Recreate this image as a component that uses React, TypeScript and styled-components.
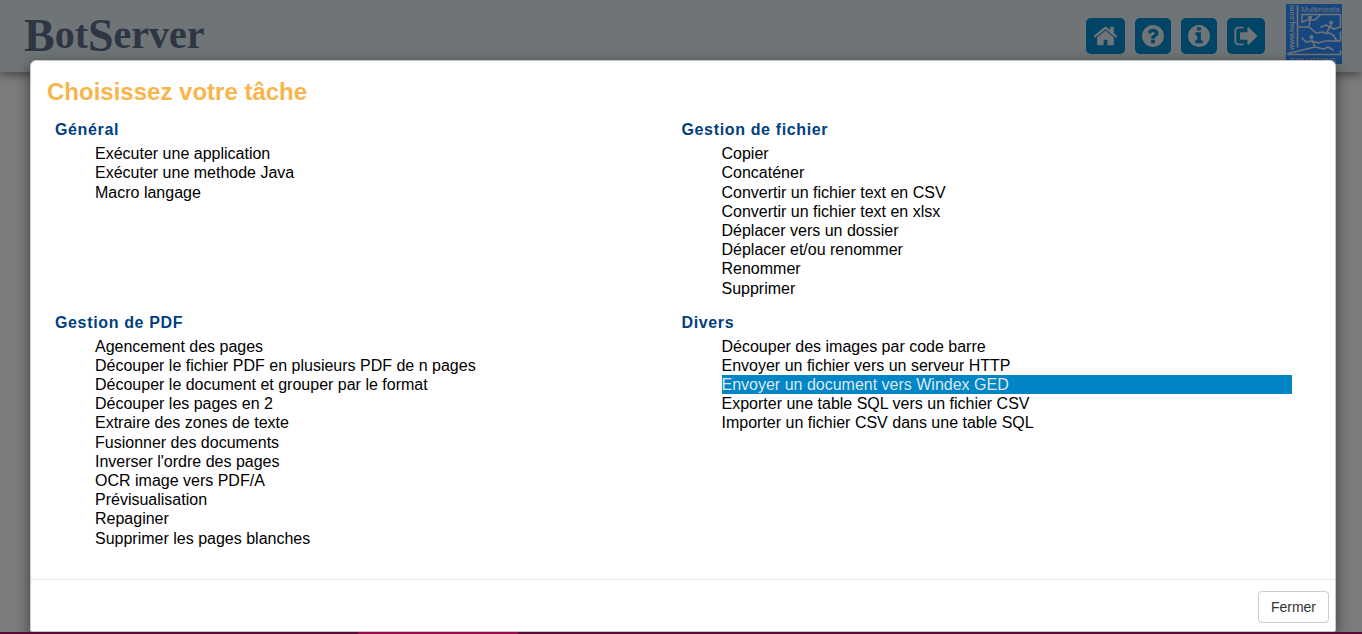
import React from "react";
import styled, { createGlobalStyle } from "styled-components";

const GlobalStyle = createGlobalStyle`
  *, *::before, *::after { box-sizing: border-box; }
  html, body { margin: 0; overflow: hidden; }
  body {
    background: #f8f9fb;
    color: #000;
    font-family: "Liberation Sans", Arial, sans-serif;
    font-size: 16px;
    line-height: 1.2;
  }
`;

const Page = styled.div`
  position: relative;
  height: 100vh;
  overflow: hidden;
`;

const Header = styled.header`
  display: flex;
  align-items: flex-start;
  justify-content: space-between;
  height: 72px;
  padding: 4px 20px 0 24px;
  background: #dfe8ee;
  box-shadow: 0 2px 10px rgba(0, 0, 0, 0.5);
`;

const Brand = styled.a`
  padding-top: 10px;
  color: #5c6b88;
  font-family: "Liberation Serif", "Times New Roman", serif;
  font-size: 40px;
  line-height: 42px;
  font-weight: bold;
  text-decoration: none;
`;

const Capital = styled.span`
  font-size: 46px;
  line-height: 42px;
  vertical-align: -3px;
`;

const Actions = styled.nav`
  display: flex;
  gap: 10px;
`;

const IconButton = styled.button`
  display: flex;
  align-items: center;
  justify-content: center;
  height: 36px;
  margin-top: 14px;
  padding: 0 7px;
  border: 0;
  border-radius: 5px;
  background: #008aca;
  color: #dfe8ee;
`;

const Glyph = styled.svg`
  height: 26px;
  fill: currentColor;
`;

const Logo = styled.svg`
  width: 56px;
  height: 60px;
  margin-left: 11px;
`;

const Backdrop = styled.div`
  position: absolute;
  inset: 0;
  padding: 60px 26px 2px 30px;
  background: rgba(0, 0, 0, 0.5);
`;

const Dialog = styled.section`
  display: flex;
  flex-direction: column;
  height: 100%;
  border: 1px solid #c8c8c8;
  border-radius: 6px 6px 2px 2px;
  background: #fff;
  box-shadow: 0 5px 15px rgba(0, 0, 0, 0.5);
`;

const Title = styled.h1`
  margin: 15px 16px 13px;
  color: #f9b54c;
  font-size: 24px;
  line-height: 1.3;
`;

const Groups = styled.div`
  flex: 1;
  display: grid;
  grid-template-columns: 1fr 1fr;
  align-content: start;
  row-gap: 15px;
  padding: 0 27px 0 24px;
`;

const Group = styled.section`
  padding-right: 16px;
`;

const GroupTitle = styled.h2`
  margin: 0 0 4px;
  color: #004080;
  font-size: 16px;
  line-height: 20px;
  letter-spacing: 0.04em;
`;

const TaskList = styled.ul`
  margin: 0;
  padding: 0 0 0 40px;
  list-style: none;
`;

const Task = styled.a<{ $active?: boolean }>`
  display: block;
  background: ${(p) => (p.$active ? "#0085c7" : "transparent")};
  color: ${(p) => (p.$active ? "#dfe8ee" : "#000")};
  text-decoration: none;
`;

const Footer = styled.footer`
  display: flex;
  justify-content: flex-end;
  padding: 11px 6px 8px;
  border-top: 1px solid #e5e5e5;
`;

const CloseButton = styled.button`
  padding: 5px 12px;
  border: 1px solid #ccc;
  border-radius: 4px;
  background: #fff;
  color: #333;
  font-family: inherit;
  font-size: 14px;
  line-height: 20px;
`;

const Progress = styled.div`
  position: absolute;
  inset: auto 0 0 0;
  height: 2px;
  padding-left: 358px;
  background: #560a35;
`;

const ProgressValue = styled.div`
  width: 160px;
  height: 2px;
  background: #9b0a4b;
`;

const disc =
  "M1664 896q0 209-103 385.5t-279.5 279.5-385.5 103-385.5-103-279.5-279.5-103-385.5 103-385.5 279.5-279.5 385.5-103 385.5 103 279.5 279.5 103 385.5z";

const actions = [
  {
    label: "Accueil",
    width: 25,
    viewBox: "64 0 1664 1792",
    path: "M1472 992v480q0 26-19 45t-45 19h-384v-384h-256v384h-384q-26 0-45-19t-19-45v-480q0-1 .5-3t.5-3l575-474 575 474q1 2 1 6zm223-69l-62 74q-8 9-21 11h-3q-13 0-21-7l-692-577-692 577q-12 8-24 7-13-2-21-11l-62-74q-8-10-7-23.5t11-21.5l719-599q32-26 76-26t76 26l244 204v-195q0-14 9-23t23-9h192q14 0 23 9t9 23v408l219 182q10 8 11 21.5t-7 23.5z",
  },
  {
    label: "Aide",
    width: 22,
    viewBox: "128 0 1536 1792",
    path: "M1024 1376v-192q0-14-9-23t-23-9h-192q-14 0-23 9t-9 23v192q0 14 9 23t23 9h192q14 0 23-9t9-23zm256-672q0-88-55.5-163t-138.5-116-170-41q-243 0-371 213-15 24 8 42l132 100q7 6 19 6 16 0 25-12 53-68 86-92 34-24 86-24 48 0 85.5 26t37.5 59q0 38-20 61t-68 45q-63 28-115.5 86.5t-52.5 125.5v36q0 14 9 23t23 9h192q14 0 23-9t9-23q0-19 21.5-49.5t54.5-49.5q32-18 49-28.5t46-35 44.5-48 28-60.5 12.5-81z" + disc,
  },
  {
    label: "Informations",
    width: 22,
    viewBox: "128 0 1536 1792",
    path: "M1152 1376v-160q0-14-9-23t-23-9h-96v-512q0-14-9-23t-23-9h-320q-14 0-23 9t-9 23v160q0 14 9 23t23 9h96v320h-96q-14 0-23 9t-9 23v160q0 14 9 23t23 9h448q14 0 23-9t9-23zm-128-896v-160q0-14-9-23t-23-9h-192q-14 0-23 9t-9 23v160q0 14 9 23t23 9h192q14 0 23-9t9-23z" + disc,
  },
  {
    label: "Déconnexion",
    width: 24,
    viewBox: "64 0 1600 1792",
    path: "M704 1440q0 4 1 20t.5 26.5-3 23.5-10 19.5-20.5 6.5h-320q-119 0-203.5-84.5t-84.5-203.5v-704q0-119 84.5-203.5t203.5-84.5h320q13 0 22.5 9.5t9.5 22.5q0 4 1 20t.5 26.5-3 23.5-10 19.5-20.5 6.5h-320q-66 0-113 47t-47 113v704q0 66 47 113t113 47h312l11.5 1 11.5 3 8 5.5 7 9 2 13.5zm928-544q0 26-19 45l-544 544q-19 19-45 19t-45-19-19-45v-288h-448q-26 0-45-19t-19-45v-384q0-26 19-45t45-19h448v-288q0-26 19-45t45-19 45 19l544 544q19 19 19 45z",
  },
];

const groups = [
  {
    title: "Général",
    tasks: ["Exécuter une application", "Exécuter une methode Java", "Macro langage"],
  },
  {
    title: "Gestion de fichier",
    tasks: [
      "Copier",
      "Concaténer",
      "Convertir un fichier text en CSV",
      "Convertir un fichier text en xlsx",
      "Déplacer vers un dossier",
      "Déplacer et/ou renommer",
      "Renommer",
      "Supprimer",
    ],
  },
  {
    title: "Gestion de PDF",
    tasks: [
      "Agencement des pages",
      "Découper le fichier PDF en plusieurs PDF de n pages",
      "Découper le document et grouper par le format",
      "Découper les pages en 2",
      "Extraire des zones de texte",
      "Fusionner des documents",
      "Inverser l'ordre des pages",
      "OCR image vers PDF/A",
      "Prévisualisation",
      "Repaginer",
      "Supprimer les pages blanches",
    ],
  },
  {
    title: "Divers",
    tasks: [
      "Découper des images par code barre",
      "Envoyer un fichier vers un serveur HTTP",
      "Envoyer un document vers Windex GED",
      "Exporter une table SQL vers un fichier CSV",
      "Importer un fichier CSV dans une table SQL",
    ],
  },
];

const activeTask = "Envoyer un document vers Windex GED";

function CompanyLogo() {
  return (
    <Logo viewBox="0 0 56 60" role="img" aria-label="Multimédia Solutions">
      <rect width="56" height="60" fill="#308cff" />
      <g fill="#dfe8ee" fontFamily="Liberation Sans, sans-serif">
        <text x="15" y="8" fontSize="8">Multimédia</text>
        <text transform="translate(8 46) rotate(-90)" fontSize="7" fontWeight="bold">www.luq.com</text>
        <text x="4" y="59" fontSize="8">SOLUTIONS</text>
      </g>
      <g fill="none" stroke="#dfe8ee" strokeWidth="1.6" strokeLinejoin="round" strokeLinecap="round">
        <path d="M11.5 2V43M16 18V10.500H54.500V23M54.500 28V37H40M2 50.500H54.500V47" />
        <path d="M16 18L21 16H29L34 11M24 16L23 23M13 23H23L30 29L37 28L41 30" />
        <path d="M35 23L40 21L48 25L54 23M45 21L41 28L47 31L51 37" />
        <path d="M16 34L20 38L26 37L32 39L39 37M26 36L29 43L38 45L42 43L47 46M29 43L2 49.500" />
      </g>
      <g fill="#dfe8ee">
        <circle cx="24" cy="13.500" r="2" />
        <circle cx="45" cy="18.500" r="2" />
        <circle cx="25.500" cy="33" r="2" />
      </g>
    </Logo>
  );
}

export default function App() {
  return (
    <>
      <GlobalStyle />
      <Page>
        <Header>
          <Brand href="#"><Capital>B</Capital>ot<Capital>S</Capital>erver</Brand>
          <Actions>
            {actions.map((action) => (
              <IconButton key={action.label} type="button" aria-label={action.label}>
                <Glyph width={action.width} viewBox={action.viewBox} aria-hidden="true">
                  <path fillRule="evenodd" d={action.path} />
                </Glyph>
              </IconButton>
            ))}
            <CompanyLogo />
          </Actions>
        </Header>
        <Backdrop>
          <Dialog role="dialog" aria-labelledby="dialog-title">
            <Title id="dialog-title">Choisissez votre tâche</Title>
            <Groups>
              {groups.map((group) => (
                <Group key={group.title}>
                  <GroupTitle>{group.title}</GroupTitle>
                  <TaskList>
                    {group.tasks.map((task) => (
                      <li key={task}>
                        <Task href="#" $active={task === activeTask}>{task}</Task>
                      </li>
                    ))}
                  </TaskList>
                </Group>
              ))}
            </Groups>
            <Footer>
              <CloseButton type="button">Fermer</CloseButton>
            </Footer>
          </Dialog>
        </Backdrop>
        <Progress><ProgressValue /></Progress>
      </Page>
    </>
  );
}
